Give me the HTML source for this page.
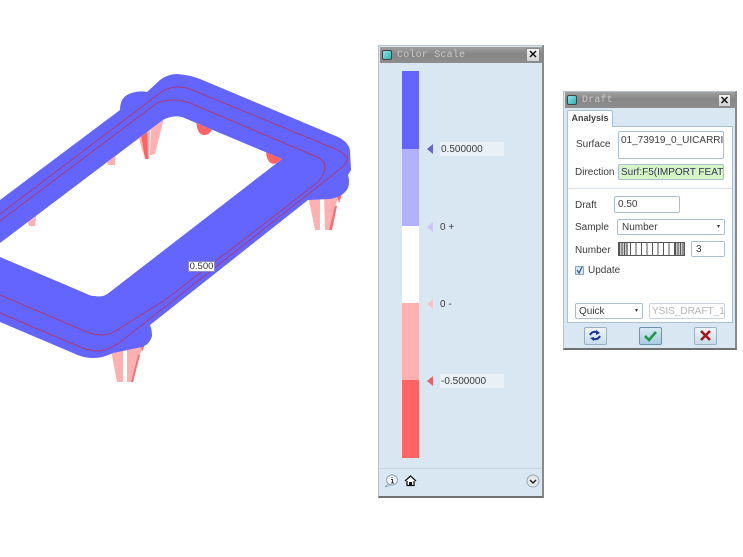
<!DOCTYPE html>
<html><head><meta charset="utf-8">
<style>
html,body{margin:0;padding:0;background:#fff}
body{width:743px;height:557px;position:relative;overflow:hidden;font-family:"Liberation Sans",sans-serif;font-size:10px;color:#3c3c3c;filter:blur(.3px)}
div{position:absolute;box-sizing:border-box}
svg{position:absolute;left:0;top:0}
.t{white-space:nowrap;line-height:16px}
.inp{background:#fff;border:1px solid #a9c0cf;border-radius:2px;padding-left:2px;white-space:nowrap;overflow:hidden;line-height:15px}
.title{background:linear-gradient(#a2a2a2,#868686 45%,#8e8e8e)}
.ic{background:linear-gradient(135deg,#86e8e8,#35b0b0);border:1px solid #444;border-radius:2px;width:10px;height:10px}
.x{background:linear-gradient(#f4f4f4,#d4d4d4);border:1px solid #888;text-align:center;color:#111;font-weight:bold;font-size:11px;line-height:12px}
.ttl{font-family:"Liberation Mono",monospace;font-size:10px;color:#c8c8c8;letter-spacing:.2px;white-space:nowrap;line-height:14px}
.btn{background:linear-gradient(#eef5fa,#c8dcea);border:1px solid #9ab1c1;border-radius:2px;width:23px;height:18px}
</style></head><body>

<svg width="370" height="400" viewBox="0 0 370 400">
<defs><clipPath id="h"><path d="M0 243L163 120Q172 115 182 117L282 159L110 292Q103 298 95 296Q90 296 87 294L0 257Z"/></clipPath></defs>
<!-- front right leg -->
<path d="M308 196L315 230 320 230 320 196Z" fill="#ffb0b0"/>
<path d="M324 196L325 230 331 230 338 196Z" fill="#ffb0b0"/>
<path d="M329 230L332 230 337 206 335 206Z" fill="#f87070"/>
<path d="M337 196L339 203 342 194Z" fill="#ff6464"/>
<!-- front left leg -->
<path d="M110 345L117 382 123 382 123 345Z" fill="#ffb0b0"/>
<path d="M127 345L127 382 132 382 143 345Z" fill="#ffb0b0"/>
<path d="M131 382L133 382 140 355 138 355Z" fill="#f87070"/>
<path d="M141 346L142 352 145 344Z" fill="#ff6464"/>
<!-- body outline -->
<path fill="#6464ff" d="M0 200L120 110Q120 99 127 95Q137 90 147 92L160 80Q168 74 177 74Q190 75 200 79L338 137Q350 143 350 152L351 170L348 175Q350 182 348 188Q343 197 330 199L308 200L150 325Q152 330 152 336Q150 344 142 347L113 353Q103 358 93 358Q83 358 73 353L0 322Z"/>
<!-- opening -->
<path fill="#fff" d="M0 243L163 120Q172 115 182 117L282 159L110 292Q103 298 95 296Q90 296 87 294L0 257Z"/>
<!-- legs visible through the opening -->
<g clip-path="url(#h)">
<path d="M137 130L142 150 146 159 149 159 150 130Z" fill="#ffb0b0"/>
<path d="M141 134L145 159 148 159 147 128Z" fill="#ff6464"/>
<path d="M150 155L155 154 164 118 151 126Z" fill="#ffb0b0"/>
<path d="M196 120Q197 135 204 135 212 135 213 124Z" fill="#ff6464"/>
<path d="M266 150Q266 163 274 164 281 162 283 159L272 150Z" fill="#ff6464"/>
<path d="M105 155L108 165 115 165 116 150Z" fill="#ffb0b0"/>
<path d="M26 215L29 226 35 226 37 208Z" fill="#ffb0b0"/>
</g>
<!-- red lines -->
<g fill="none" stroke="#a83a78" stroke-width="1">
<path d="M0 214L160 93Q168 87 177 87Q184 87 190 89L333 148Q347 154 347 159Q347 164 340 169L170 303L123 340Q112 349 100 351Q90 351 80 347L0 313"/>
<path d="M0 221L157 103Q165 100 173 100Q182 100 190 103L317 157Q325 161 325 167Q325 174 318 182L260 227L165 300L117 330Q110 335 103 335Q95 335 87 332L0 295"/>
</g>
</svg>
<div class="t" style="left:188px;top:261px;width:27px;height:11px;background:#fff;border:1px solid #8a8ac8;font-size:9.500px;line-height:9px;text-align:center;color:#333">0.500</div>

<!-- Color Scale -->
<div style="left:378px;top:45px;width:166px;height:453px;background:#d9e7f2;border:1px solid #b8c0c8;border-right:2px solid #8a8a8a;border-bottom:2px solid #707070"></div>
<div class="title" style="left:380px;top:47px;width:162px;height:16px"></div>
<div class="ic" style="left:382px;top:50px"></div>
<div class="ttl" style="left:397px;top:49px">Color Scale</div>
<div class="x" style="left:526px;top:48px;width:14px;height:14px">✕</div>

<div style="left:402px;top:71px;width:17px;height:78px;background:#6464ff"></div>
<div style="left:402px;top:149px;width:17px;height:77px;background:#b1b1ff"></div>
<div style="left:402px;top:226px;width:17px;height:77px;background:#fff"></div>
<div style="left:402px;top:303px;width:17px;height:77px;background:#ffb1b1"></div>
<div style="left:402px;top:380px;width:17px;height:78px;background:#ff6464"></div>

<svg width="743" height="557" viewBox="0 0 743 557">
<path d="M433 144L427 149 433 154Z" fill="#6464c8"/>
<path d="M433 222L427 227 433 232Z" fill="#c8c8ee"/>
<path d="M433 299L427 304 433 309Z" fill="#f2c4cc"/>
<path d="M433 376L427 381 433 386Z" fill="#e8606c"/>
</svg>
<div class="t" style="left:440px;top:142px;width:64px;height:14px;background:#e9f1f7;padding-left:1px">0.500000</div>
<div class="t" style="left:440px;top:220px">0 +</div>
<div class="t" style="left:440px;top:297px">0 -</div>
<div class="t" style="left:440px;top:374px;width:64px;height:14px;background:#e9f1f7;padding-left:1px">-0.500000</div>

<div style="left:380px;top:468px;width:162px;height:1px;background:#c4d4e0"></div>
<svg width="743" height="557" viewBox="0 0 743 557">
<ellipse cx="392" cy="480" rx="5.500" ry="5" fill="#f0f5f9" stroke="#8fa5b5"/>
<path d="M388 484L385 487 391 485Z" fill="#f0f5f9" stroke="#8fa5b5" stroke-width=".7"/>
<path d="M392 477V478M391 479.500H392.500V483M391 483H394" stroke="#334" fill="none"/>
<path d="M405 481L410.500 476 416 481M407 481V485.500H414V481" fill="#fff" stroke="#111" stroke-width="1.300"/>
<rect x="409" y="482" width="3" height="3.500" fill="#111"/>
<circle cx="533" cy="481" r="6" fill="#e6e9ea" stroke="#9aa"/>
<path d="M530 480L533 483 536 480" fill="none" stroke="#222" stroke-width="1.500"/>
</svg>

<!-- Draft -->
<div style="left:563px;top:91px;width:174px;height:259px;background:#d9e7f2;border:1px solid #b8c0c8;border-right:2px solid #8a8a8a;border-bottom:2px solid #707070"></div>
<div class="title" style="left:565px;top:92px;width:170px;height:16px"></div>
<div class="ic" style="left:567px;top:95px"></div>
<div class="ttl" style="left:582px;top:94px">Draft</div>
<div class="x" style="left:718px;top:94px;width:13px;height:13px">✕</div>

<div style="left:567px;top:126px;width:166px;height:197px;background:#fff;border:1px solid #a9c0cf"></div>
<div class="t" style="left:567px;top:110px;width:46px;height:17px;background:#fff;border:1px solid #a9c0cf;border-bottom:0;border-radius:2px 2px 0 0;font-weight:bold;font-size:9px;text-align:center;line-height:15px;color:#444">Analysis</div>

<div class="t" style="left:576px;top:137px">Surface</div>
<div class="inp" style="left:618px;top:131px;width:106px;height:28px;padding-top:1px">01_73919_0_UICARRIE</div>
<div class="t" style="left:575px;top:165px">Direction</div>
<div class="inp" style="left:618px;top:164px;width:106px;height:16px;background:#d6f5c4;padding-left:2px;color:#335">Surf:F5(IMPORT FEAT!</div>
<div style="left:568px;top:188px;width:164px;height:1px;background:#d8e2e8"></div>
<div class="t" style="left:575px;top:198px">Draft</div>
<div class="inp" style="left:614px;top:196px;width:66px;height:17px;padding-left:3px">0.50</div>
<div class="t" style="left:575px;top:220px">Sample</div>
<div class="inp" style="left:617px;top:219px;width:108px;height:16px;padding-left:4px">Number</div>
<div class="t" style="left:717px;top:219px;font-size:6px;color:#333">▾</div>
<div class="t" style="left:575px;top:243px">Number</div>
<div style="left:618px;top:242px;width:67px;height:14px;border:1px solid #555;background:repeating-linear-gradient(90deg,#555 0 1px,#fff 1px 5.500px)"></div>
<div style="left:619px;top:243px;width:9px;height:12px;background:repeating-linear-gradient(90deg,#555 0 1px,#ccc 1px 2.500px)"></div>
<div style="left:675px;top:243px;width:9px;height:12px;background:repeating-linear-gradient(90deg,#555 0 1px,#ccc 1px 2.500px)"></div>
<div class="inp" style="left:691px;top:241px;width:34px;height:16px;padding-left:4px">3</div>
<div style="left:575px;top:266px;width:9px;height:9px;background:#d6e8f6;border:1px solid #7fa3c0;border-radius:1px"></div>
<svg width="743" height="557" viewBox="0 0 743 557"><path d="M577 270L579 273 582 267" fill="none" stroke="#2a5a90" stroke-width="1.200"/></svg>
<div class="t" style="left:588px;top:263px">Update</div>
<div class="inp" style="left:575px;top:303px;width:68px;height:16px;padding-left:3px">Quick</div>
<div class="t" style="left:635px;top:303px;font-size:6px;color:#333">▾</div>
<div class="inp" style="left:649px;top:303px;width:76px;height:16px;border-color:#c8d4dc;color:#b4b4b4;padding-left:2px">YSIS_DRAFT_1</div>

<div class="btn" style="left:584px;top:327px"></div>
<div class="btn" style="left:639px;top:327px;background:linear-gradient(#d6e8f5,#a8cce6);border-color:#6f93ad"></div>
<div class="btn" style="left:694px;top:327px"></div>
<svg width="743" height="557" viewBox="0 0 743 557">
<path d="M590 335Q592 331 597 332" fill="none" stroke="#1b2fa0" stroke-width="2"/>
<path d="M596 330L600 333 596 335Z" fill="#1b2fa0"/>
<path d="M600 336Q598 340 593 339" fill="none" stroke="#1b2fa0" stroke-width="2"/>
<path d="M594 337L590 338 594 341Z" fill="#1b2fa0"/>
<path d="M645 336L649 340 656 332" fill="none" stroke="#1c9a3c" stroke-width="2.600"/>
<path d="M701 331L710 340M710 331L701 340" fill="none" stroke="#a81818" stroke-width="2.600"/>
</svg>
</body></html>
